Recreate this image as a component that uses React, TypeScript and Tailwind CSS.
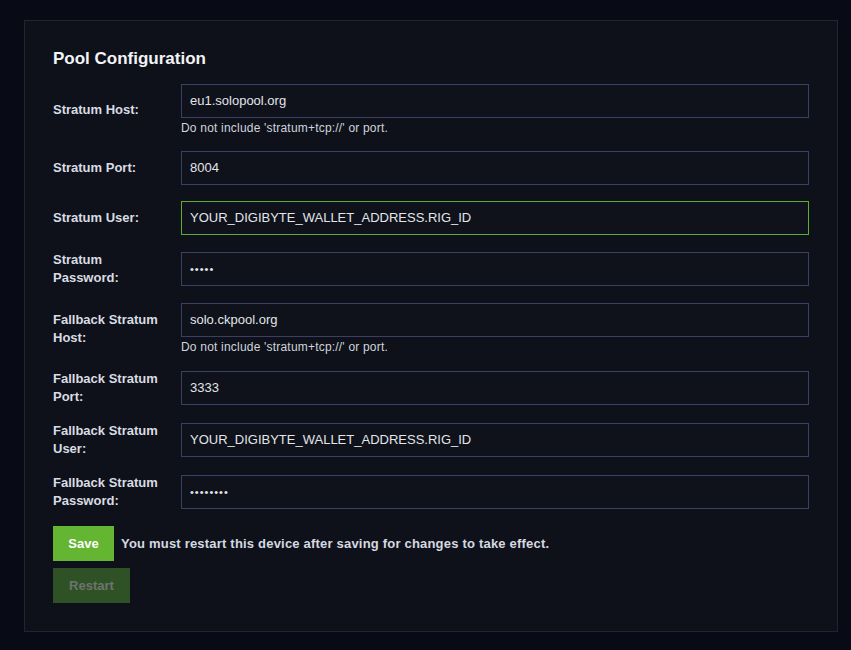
import React from "react";

type Field = {
  label: string;
  value: string;
  help?: boolean;
  type?: "text" | "password";
  focused?: boolean;
};

const fields: Field[] = [
  { label: "Stratum Host:", value: "eu1.solopool.org", help: true },
  { label: "Stratum Port:", value: "8004" },
  { label: "Stratum User:", value: "YOUR_DIGIBYTE_WALLET_ADDRESS.RIG_ID", focused: true },
  { label: "Stratum Password:", value: "•••••", type: "password" },
  { label: "Fallback Stratum Host:", value: "solo.ckpool.org", help: true },
  { label: "Fallback Stratum Port:", value: "3333" },
  { label: "Fallback Stratum User:", value: "YOUR_DIGIBYTE_WALLET_ADDRESS.RIG_ID" },
  { label: "Fallback Stratum Password:", value: "••••••••", type: "password" },
];

function Row({ f }: { f: Field }) {
  return (
    <div className="flex items-center mb-4">
      <label className="w-[128px] shrink-0 pr-3 text-[13px] leading-[18px] font-semibold text-[#d9dce3]">
        {f.label}
      </label>
      <div className="flex-1 flex flex-col">
        <div
          className={
            "h-[34px] flex items-center px-2 border bg-[#0f121a] text-[13px] text-[#e2e5ea] " +
            (f.focused ? "border-[#5fae2f]" : "border-[#3a3f63]")
          }
        >
          <span className={f.type === "password" ? "tracking-[1px] text-[11px]" : ""}>{f.value}</span>
        </div>
        {f.help && (
          <div className="mt-[4px] text-[12px] leading-[13px] tracking-[0.2px] text-[#d0d4dc]">
            Do not include 'stratum+tcp://' or port.
          </div>
        )}
      </div>
    </div>
  );
}

export default function App() {
  return (
    <div
      className="min-h-[650px] w-full bg-[#080b16] pt-5 pl-6"
      style={{ fontFamily: '"Liberation Sans", Arial, sans-serif' }}
    >
      <div className="w-[814px] h-[612px] bg-[#0e111a] border border-[#22252f] p-7">
        <h2 className="text-[17px] leading-[19px] font-semibold text-[#f2f4f7] mb-4">Pool Configuration</h2>
        {fields.map((f) => (
          <Row key={f.label} f={f} />
        ))}
        <div className="flex items-center gap-[7px]">
          <button className="w-[61px] h-[35px] bg-[#63b532] text-white text-[13px] font-semibold">Save</button>
          <span className="text-[13px] font-bold tracking-[0.2px] text-[#d6d9e0]">
            You must restart this device after saving for changes to take effect.
          </span>
        </div>
        <button className="mt-[7px] w-[77px] h-[35px] bg-[#2e5125] text-[#6e736d] text-[13px] font-semibold">
          Restart
        </button>
      </div>
    </div>
  );
}
